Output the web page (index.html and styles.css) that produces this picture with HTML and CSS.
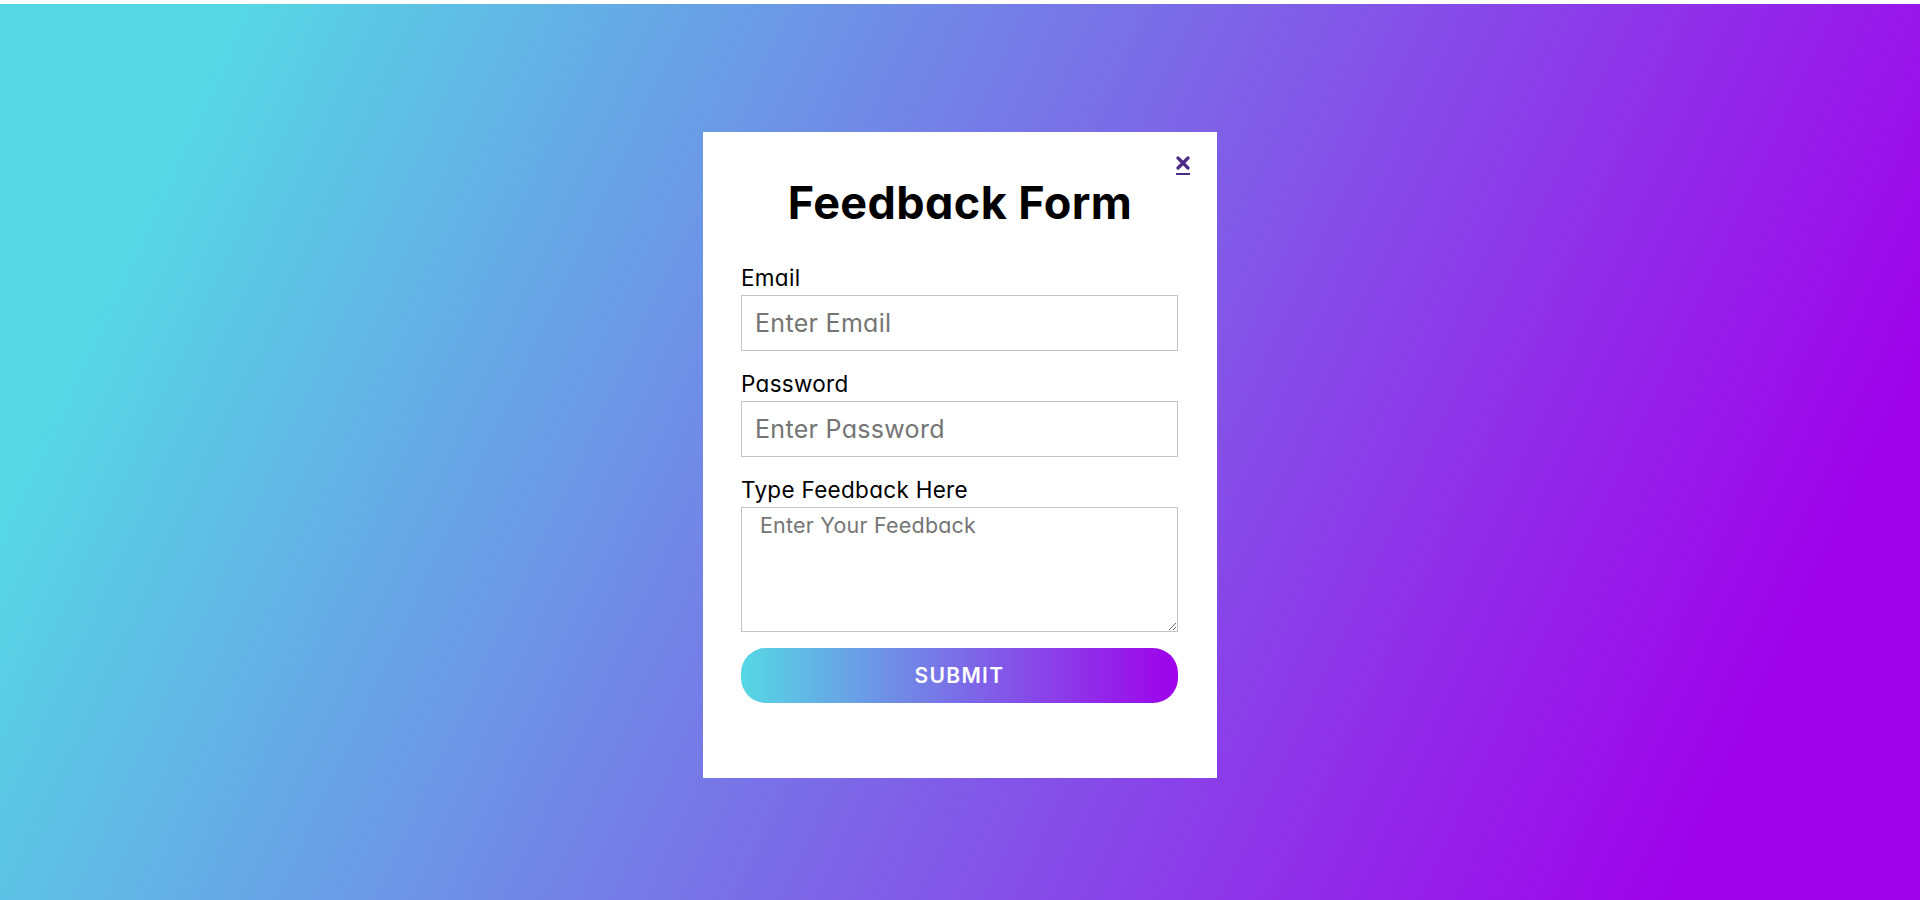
FILE: index.html
```html
<!DOCTYPE html>
<html lang="en">
<head>
<meta charset="utf-8">
<title>Feedback Form</title>
<link rel="stylesheet" href="styles.css">
</head>
<body>
<div class="page">
  <div class="card">
    <a class="close" href="#" aria-label="Close">
      <svg width="14" height="14" viewBox="0 0 14 14"><path d="M2 2 L12 12 M12 2 L2 12" stroke="currentColor" stroke-width="3.2" stroke-linecap="round" fill="none"/></svg>
    </a>
    <h1 class="title">Feedback Form</h1>
    <form class="form">
      <div class="field">
        <label class="label" for="email">Email</label>
        <input class="input" id="email" type="email" placeholder="Enter Email">
      </div>
      <div class="field">
        <label class="label" for="password">Password</label>
        <input class="input" id="password" type="password" placeholder="Enter Password">
      </div>
      <div class="field">
        <label class="label" for="feedback">Type Feedback Here</label>
        <textarea class="textarea" id="feedback" placeholder="Enter Your Feedback"></textarea>
      </div>
      <button class="submit" type="button">SUBMIT</button>
    </form>
  </div>
</div>
</body>
</html>
```
FILE: styles.css
```css
* { box-sizing: border-box; }

html, body {
  margin: 0;
  padding: 0;
  background: #ffffff;
}

body {
  font-family: "Inter", "Noto Sans", sans-serif;
  font-feature-settings: "cv11" 1;
  padding-top: 4px;
}

.page {
  height: 896px;
  background: linear-gradient(115deg, #56d8e4 10%, #9f01ea 90%);
  display: flex;
  justify-content: center;
  align-items: flex-start;
  padding-top: 128px;
}

.card {
  position: relative;
  width: 514px;
  height: 646px;
  background: #ffffff;
  padding: 43px 38px 0 38px;
}

.close {
  position: absolute;
  top: 24px;
  right: 27px;
  display: flex;
  flex-direction: column;
  align-items: center;
  color: #4b2a88;
  padding-bottom: 3px;
  border-bottom: 2px solid #4b2a88;
  text-decoration: none;
  line-height: 0;
}

.title {
  margin: 0 0 34px 0;
  height: 56px;
  line-height: 56px;
  font-size: 45px;
  font-weight: 700;
  text-align: center;
  color: #000000;
  letter-spacing: 0.4px;
}

.form {
  display: flex;
  flex-direction: column;
  width: 437px;
}

.field {
  display: flex;
  flex-direction: column;
  margin-bottom: 20px;
}

.field:last-of-type {
  margin-bottom: 16px;
}

.label {
  height: 30px;
  line-height: 26px;
  font-size: 22.5px;
  color: #000000;
  letter-spacing: 0.3px;
}

.input,
.textarea {
  width: 100%;
  border: 1px solid #c4c4c4;
  border-radius: 0;
  background: #ffffff;
  font-family: "Inter", "Noto Sans", sans-serif;
  font-feature-settings: "cv11" 1;
  color: #000000;
  outline: none;
  margin: 0;
}

.input {
  height: 56px;
  padding: 0 13px;
  font-size: 25px;
  letter-spacing: 0.3px;
}

.textarea {
  height: 125px;
  padding: 2px 18px;
  font-size: 21.5px;
  line-height: 30px;
  resize: vertical;
  letter-spacing: 0.2px;
}

.input::placeholder,
.textarea::placeholder {
  color: #757575;
  opacity: 1;
}

.submit {
  height: 55px;
  width: 100%;
  border: none;
  border-radius: 25px;
  background: linear-gradient(to right, #56d8e4, #9f01ea);
  color: #ffffff;
  font-family: "Inter", "Noto Sans", sans-serif;
  font-size: 21px;
  font-weight: 600;
  letter-spacing: 1.3px;
  cursor: pointer;
}
```
